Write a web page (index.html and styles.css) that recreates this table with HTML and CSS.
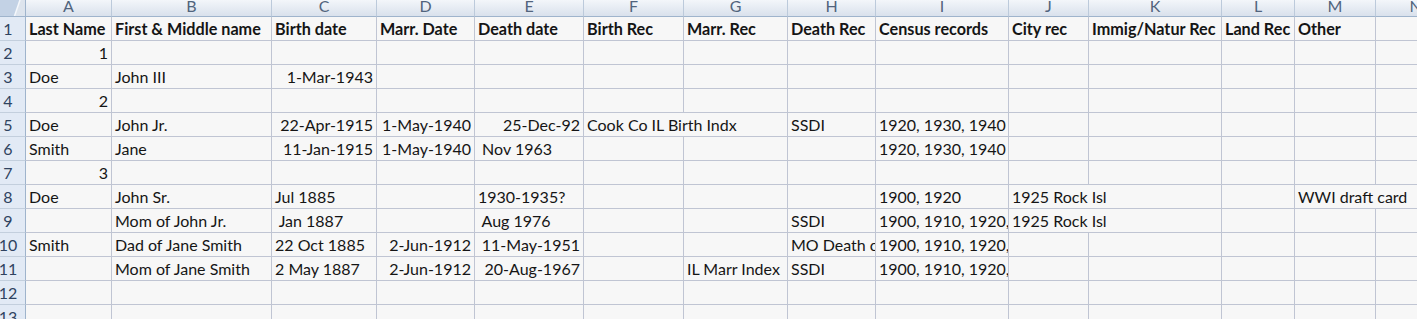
FILE: index.html
```html
<!DOCTYPE html>
<html>
<head>
<meta charset="utf-8">
<link rel="stylesheet" href="styles.css">
</head>
<body>
<div class="sheet">
<div class="corner"><svg width="25" height="16" viewBox="0 0 25 16"><rect x="0" y="0" width="25" height="16" fill="#dde4ed"/><polygon points="0,0 20,0 14.5,16 0,16" fill="#c3d2e5"/><line x1="20" y1="0" x2="14.5" y2="16" stroke="#f4f7fb" stroke-width="1.5"/></svg></div>
<div class="ch">A</div><div class="ch">B</div><div class="ch">C</div><div class="ch">D</div><div class="ch">E</div><div class="ch">F</div><div class="ch">G</div><div class="ch">H</div><div class="ch">I</div><div class="ch">J</div><div class="ch">K</div><div class="ch">L</div><div class="ch">M</div><div class="ch">N</div>

<div class="rh">1</div>
<div class="c b">Last Name</div><div class="c b">First &amp; Middle name</div><div class="c b">Birth date</div><div class="c b">Marr. Date</div><div class="c b">Death date</div><div class="c b">Birth Rec</div><div class="c b">Marr. Rec</div><div class="c b">Death Rec</div><div class="c b">Census records</div><div class="c b">City rec</div><div class="c b">Immig/Natur Rec</div><div class="c b">Land Rec</div><div class="c b">Other</div><div class="c"></div>

<div class="rh">2</div>
<div class="c r">1</div><div class="c"></div><div class="c"></div><div class="c"></div><div class="c"></div><div class="c"></div><div class="c"></div><div class="c"></div><div class="c"></div><div class="c"></div><div class="c"></div><div class="c"></div><div class="c"></div><div class="c"></div>

<div class="rh">3</div>
<div class="c">Doe</div><div class="c">John III</div><div class="c r">1-Mar-1943</div><div class="c"></div><div class="c"></div><div class="c"></div><div class="c"></div><div class="c"></div><div class="c"></div><div class="c"></div><div class="c"></div><div class="c"></div><div class="c"></div><div class="c"></div>

<div class="rh">4</div>
<div class="c r">2</div><div class="c"></div><div class="c"></div><div class="c"></div><div class="c"></div><div class="c"></div><div class="c"></div><div class="c"></div><div class="c"></div><div class="c"></div><div class="c"></div><div class="c"></div><div class="c"></div><div class="c"></div>

<div class="rh">5</div>
<div class="c">Doe</div><div class="c">John Jr.</div><div class="c r">22-Apr-1915</div><div class="c r">1-May-1940</div><div class="c r">25-Dec-92</div><div class="c s2">Cook Co IL Birth Indx</div><div class="c">SSDI</div><div class="c">1920, 1930, 1940</div><div class="c"></div><div class="c"></div><div class="c"></div><div class="c"></div><div class="c"></div>

<div class="rh">6</div>
<div class="c">Smith</div><div class="c">Jane</div><div class="c r">11-Jan-1915</div><div class="c r">1-May-1940</div><div class="c"> Nov 1963</div><div class="c"></div><div class="c"></div><div class="c"></div><div class="c">1920, 1930, 1940</div><div class="c"></div><div class="c"></div><div class="c"></div><div class="c"></div><div class="c"></div>

<div class="rh">7</div>
<div class="c r">3</div><div class="c"></div><div class="c"></div><div class="c"></div><div class="c"></div><div class="c"></div><div class="c"></div><div class="c"></div><div class="c"></div><div class="c"></div><div class="c"></div><div class="c"></div><div class="c"></div><div class="c"></div>

<div class="rh">8</div>
<div class="c">Doe</div><div class="c">John Sr.</div><div class="c">Jul 1885</div><div class="c"></div><div class="c">1930-1935?</div><div class="c"></div><div class="c"></div><div class="c"></div><div class="c">1900, 1920</div><div class="c s2">1925 Rock Isl</div><div class="c"></div><div class="c s2">WWI draft card</div>

<div class="rh">9</div>
<div class="c"></div><div class="c">Mom of John Jr.</div><div class="c"> Jan 1887</div><div class="c"></div><div class="c"> Aug 1976</div><div class="c"></div><div class="c"></div><div class="c">SSDI</div><div class="c">1900, 1910, 1920,</div><div class="c s2">1925 Rock Isl</div><div class="c"></div><div class="c"></div><div class="c"></div>

<div class="rh">10</div>
<div class="c">Smith</div><div class="c">Dad of Jane Smith</div><div class="c">22 Oct 1885</div><div class="c r">2-Jun-1912</div><div class="c r">11-May-1951</div><div class="c"></div><div class="c"></div><div class="c">MO Death cert</div><div class="c">1900, 1910, 1920,</div><div class="c"></div><div class="c"></div><div class="c"></div><div class="c"></div><div class="c"></div>

<div class="rh">11</div>
<div class="c"></div><div class="c">Mom of Jane Smith</div><div class="c">2 May 1887</div><div class="c r">2-Jun-1912</div><div class="c r">20-Aug-1967</div><div class="c"></div><div class="c">IL Marr Index</div><div class="c">SSDI</div><div class="c">1900, 1910, 1920,</div><div class="c"></div><div class="c"></div><div class="c"></div><div class="c"></div><div class="c"></div>

<div class="rh">12</div>
<div class="c"></div><div class="c"></div><div class="c"></div><div class="c"></div><div class="c"></div><div class="c"></div><div class="c"></div><div class="c"></div><div class="c"></div><div class="c"></div><div class="c"></div><div class="c"></div><div class="c"></div><div class="c"></div>

<div class="rh">13</div>
<div class="c"></div><div class="c"></div><div class="c"></div><div class="c"></div><div class="c"></div><div class="c"></div><div class="c"></div><div class="c"></div><div class="c"></div><div class="c"></div><div class="c"></div><div class="c"></div><div class="c"></div><div class="c"></div>
</div>
</body>
</html>
```

FILE: styles.css
```css
html, body {
  margin: 0;
  padding: 0;
  overflow: hidden;
  background: #f7f7f7;
}

body {
  font-family: Lato, "Open Sans", "Liberation Sans", sans-serif;
  font-size: 16px;
  color: #151515;
}

.sheet {
  display: grid;
  grid-template-columns: 26px 86px 160px 105px 98px 109px 100px 104px 88px 133px 80px 133px 73px 81px 80px;
  grid-template-rows: 17px repeat(13, 24px);
  width: 1456px;
}

.corner {
  border-right: 1px solid #9fb4cc;
  border-bottom: 1px solid #9fb4cc;
  overflow: hidden;
  line-height: 0;
}

.ch {
  background: linear-gradient(#f3f6fa, #d9e1ec);
  border-right: 1px solid #bccadb;
  border-bottom: 1px solid #9fb4cc;
  color: #51647d;
  font-size: 16px;
  display: flex;
  justify-content: center;
  align-items: flex-end;
  line-height: 14px;
  padding-bottom: 3px;
  box-sizing: border-box;
  overflow: hidden;
}

.rh {
  background: #e2eaf5;
  border-right: 1px solid #9fb4cc;
  border-bottom: 1px solid #c3cfdd;
  color: #2f4360;
  font-size: 16px;
  display: flex;
  justify-content: center;
  align-items: flex-end;
  line-height: 20px;
  padding-right: 9px;
  padding-bottom: 1px;
  box-sizing: border-box;
  overflow: hidden;
}

.c {
  border-right: 1px solid #c0c5d3;
  border-bottom: 1px solid #c0c5d3;
  padding: 0 3px 1px 3px;
  display: flex;
  align-items: flex-end;
  white-space: pre;
  overflow: hidden;
  line-height: 20px;
  box-sizing: border-box;
}

.r {
  justify-content: flex-end;
}

.b {
  font-weight: 700;
  font-size: 16.2px;
}

.s2 {
  grid-column: span 2;
}
```
